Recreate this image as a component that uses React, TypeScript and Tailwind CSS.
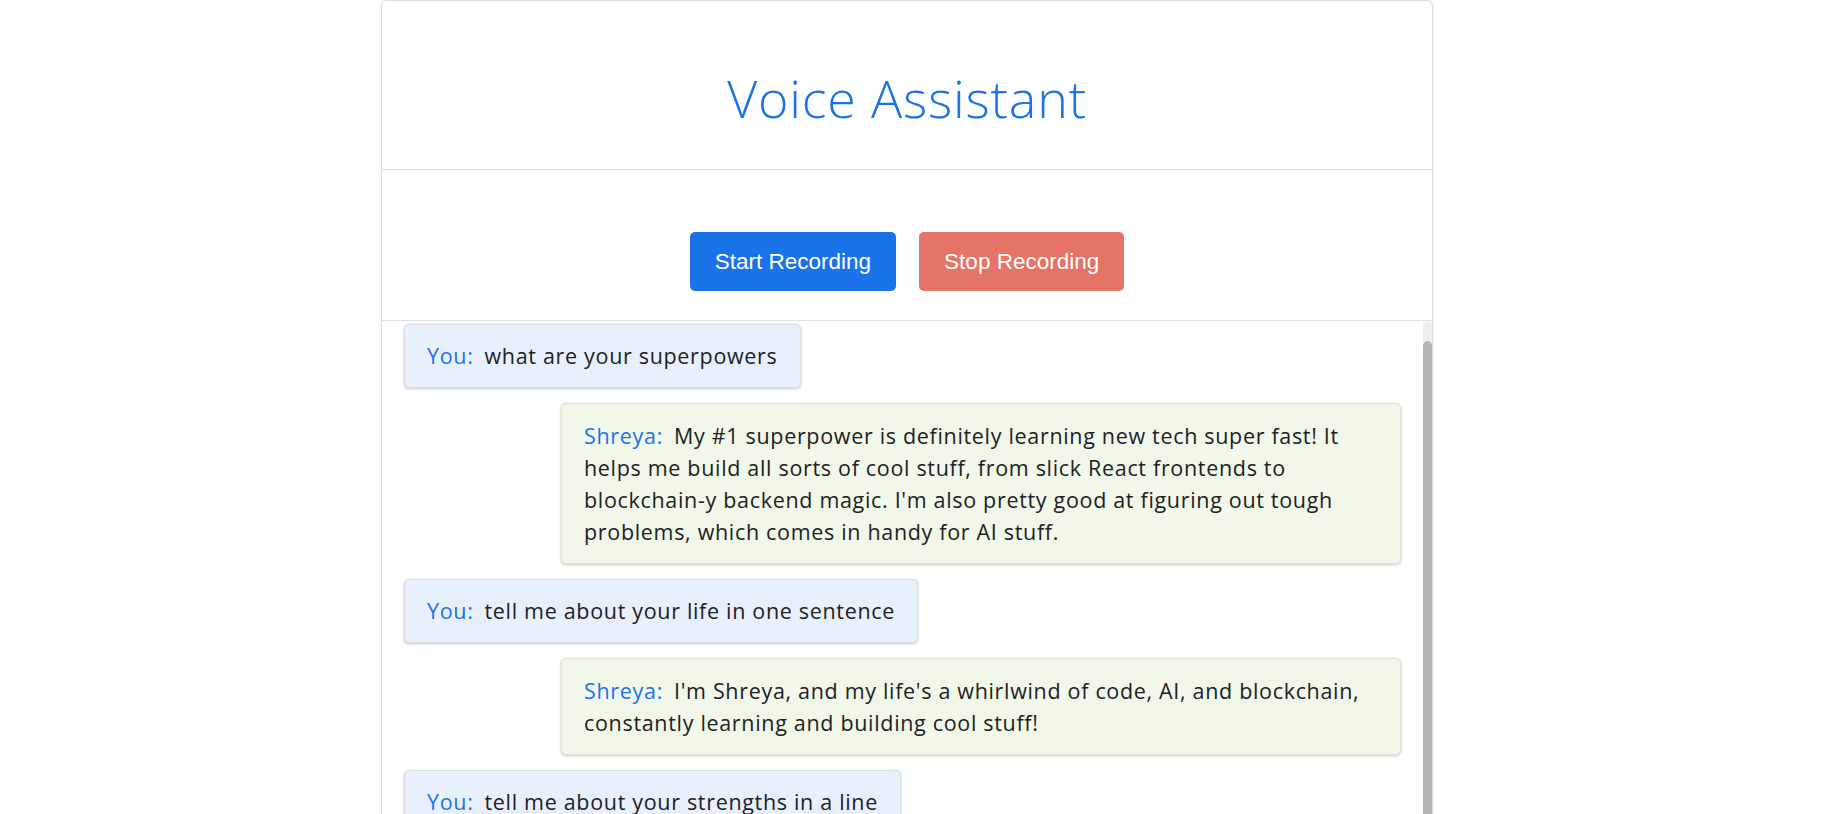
type Message = {
  from: 'user' | 'bot';
  lines: string[];
};

const messages: Message[] = [
  { from: 'user', lines: ['what are your superpowers'] },
  {
    from: 'bot',
    lines: [
      'My #1 superpower is definitely learning new tech super fast! It',
      'helps me build all sorts of cool stuff, from slick React frontends to',
      "blockchain-y backend magic. I'm also pretty good at figuring out tough",
      'problems, which comes in handy for AI stuff.',
    ],
  },
  { from: 'user', lines: ['tell me about your life in one sentence'] },
  {
    from: 'bot',
    lines: [
      "I'm Shreya, and my life's a whirlwind of code, AI, and blockchain,",
      'constantly learning and building cool stuff!',
    ],
  },
  { from: 'user', lines: ['tell me about your strengths in a line'] },
];

function ChatBubble({ message }: { message: Message }) {
  const isUser = message.from === 'user';
  return (
    <div
      className={`mb-[15px] rounded-[5px] border px-[22px] text-[21.5px] leading-[32px] tracking-[0.68px] text-[#202124] shadow-[0_1px_3px_rgba(0,0,0,0.22)] ${
        isUser
          ? 'self-start border-[#d8dde6] bg-[#e8f0fe] py-[15px]'
          : 'w-[840px] self-end border-[#dde3d6] bg-[#f1f8e9] py-[15.5px]'
      }`}
    >
      {message.lines.map((line, i) => (
        <div key={i} className="whitespace-nowrap">
          {i === 0 && (
            <span className="pr-[11px] text-[#1a73e8]">{isUser ? 'You:' : 'Shreya:'}</span>
          )}
          {line}
        </div>
      ))}
    </div>
  );
}

export default function App() {
  return (
    <div className="flex h-screen justify-center overflow-hidden bg-white pr-[19px] font-['Open_Sans',sans-serif]">
      <div className="flex h-[900px] w-[1052px] flex-col rounded-[6px] border border-[#dcdcdc] shadow-[0_0_4px_rgba(0,0,0,0.08)]">
        {/* Header */}
        <div className="flex h-[169px] justify-center border-b border-[#e0e0e0] pt-[66px]">
          <h1 className="text-[52px] leading-[62px] font-[350] tracking-[0.8px] text-[#1a73e8]">Voice Assistant</h1>
        </div>

        {/* Controls */}
        <div className="flex justify-center gap-[23px] border-b border-[#e0e0e0] pt-[62px] pb-[29px] font-['Liberation_Sans',Arial,sans-serif]">
          <button className="rounded-[5px] bg-[#1a73e8] px-[25px] py-[16px] text-[22.5px] leading-[27px] text-white">
            Start Recording
          </button>
          <button className="rounded-[5px] bg-[#e57368] px-[25px] py-[16px] text-[22.5px] leading-[27px] text-white">
            Stop Recording
          </button>
        </div>

        {/* Chat */}
        <div className="flex min-h-0 flex-1">
          <div className="flex flex-1 flex-col overflow-hidden px-[22px] pt-[3px]">
            {messages.map((m, i) => (
              <ChatBubble key={i} message={m} />
            ))}
          </div>
          <div className="flex w-[9px] flex-col bg-[#f7f7f7]">
            <div className="mt-[1px] h-[19px] rounded-t-full bg-[#ededed]" />
            <div className="flex-1 rounded-t-full bg-[#b5b5b5]" />
          </div>
        </div>
      </div>
    </div>
  );
}
